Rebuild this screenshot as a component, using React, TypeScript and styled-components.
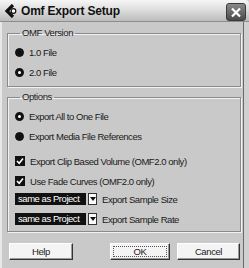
import React from 'react';
import styled, { createGlobalStyle } from 'styled-components';

const GlobalStyle = createGlobalStyle`
  html, body {
    margin: 0;
    padding: 0;
    background: #d6d6d6;
  }
  body {
    font-family: "Liberation Sans", Arial, sans-serif;
  }
`;

const Window = styled.div`
  width: 249px;
  height: 268px;
  box-sizing: border-box;
  display: flex;
  flex-direction: column;
  background: #d0d0d0;
  overflow: hidden;
`;

const TitleBar = styled.div`
  height: 22px;
  display: flex;
  align-items: center;
  padding: 0 3px 0 5px;
  gap: 4px;
  background: linear-gradient(#f6f6f6, #dedede 45%, #bcbcbc);
  border-bottom: 1px solid #8c8c8c;
  border-top-right-radius: 4px;
  box-sizing: border-box;
`;

const Title = styled.span`
  flex: 1;
  font-size: 12px;
  font-weight: bold;
  color: #111;
  letter-spacing: -0.2px;
`;

const CloseButton = styled.div`
  width: 18px;
  height: 16px;
  border-radius: 3px;
  background: linear-gradient(#8a8a8a, #4a4a4a);
  border: 1px solid #3a3a3a;
  display: flex;
  align-items: center;
  justify-content: center;
  margin-top: 3px;
`;

const Body = styled.div`
  flex: 1;
  display: flex;
  flex-direction: column;
  padding: 5px 2px 0 5px;
  margin-right: 5px;
  background: #c9c9c9;
  border-left: 2px solid #e8e8e8;
  border-right: 1px solid #6a6a6a;
`;

const Group = styled.fieldset<{ $top?: number; $bottom: number }>`
  margin: ${(p) => p.$top ?? 0}px 0 0 0;
  padding: 3px 0 ${(p) => p.$bottom}px 7px;
  border: 1px solid #8a8a8a;
  box-shadow: 1px 1px 0 #f2f2f2, inset 1px 1px 0 #f2f2f2;
  display: flex;
  flex-direction: column;
  min-width: 0;
`;

const Legend = styled.legend`
  font-size: 9.5px;
  line-height: 12px;
  padding: 0 2px;
  margin-left: 5px;
  color: #1a1a1a;
  letter-spacing: -0.4px;
`;

const Row = styled.div<{ $gap?: number }>`
  height: 20px;
  display: flex;
  align-items: center;
  gap: 5px;
  margin-top: ${(p) => p.$gap ?? 0}px;
  font-size: 9.5px;
  color: #1a1a1a;
  white-space: nowrap;
  letter-spacing: -0.45px;
`;

const Radio = styled.span<{ $on: boolean }>`
  width: 9px;
  height: 9px;
  border-radius: 50%;
  box-sizing: border-box;
  background: ${(p) => (p.$on ? '#fff' : '#111')};
  border: ${(p) => (p.$on ? '3px solid #111' : '1px solid #111')};
  flex: none;
`;

const Check = styled.span`
  width: 10px;
  height: 10px;
  background: #111;
  display: flex;
  align-items: center;
  justify-content: center;
  flex: none;
`;

const Select = styled.div`
  width: 71px;
  height: 12px;
  background: #111;
  color: #fff;
  font-size: 9.5px;
  line-height: 12px;
  padding-left: 3px;
  box-sizing: border-box;
  overflow: hidden;
`;

const SelectArrow = styled.div`
  width: 9px;
  height: 12px;
  background: #fafafa;
  border: 1px solid #333;
  box-sizing: border-box;
  display: flex;
  align-items: center;
  justify-content: center;
  margin-left: -3px;
`;

const Buttons = styled.div`
  display: flex;
  margin-top: 11px;
  padding-left: 2px;
`;

const Button = styled.div<{ $width: number; $left: number; $focus?: boolean }>`
  width: ${(p) => p.$width}px;
  height: 17px;
  margin-left: ${(p) => p.$left}px;
  box-sizing: border-box;
  background: #f4f4f4;
  border: 1px solid;
  border-color: #fff #333 #333 #fff;
  box-shadow: inset -1px -1px 0 #999;
  display: flex;
  align-items: center;
  justify-content: center;
  font-size: 9.5px;
  letter-spacing: -0.4px;
  color: #1a1a1a;
  outline: ${(p) => (p.$focus ? '1px dotted #555' : 'none')};
  outline-offset: -4px;
`;

const BackIcon = () => (
  <svg width="12" height="14" viewBox="0 0 12 14">
    <path d="M8 1 L2 7 L8 13" fill="none" stroke="#111" strokeWidth="3.2" strokeLinejoin="miter" />
    <circle cx="8.5" cy="7" r="2.3" fill="#fff" stroke="#111" strokeWidth="1.2" />
  </svg>
);

const CheckMark = () => (
  <svg width="8" height="8" viewBox="0 0 8 8">
    <path d="M1 4 L3.2 6.3 L7 1.5" fill="none" stroke="#fff" strokeWidth="1.6" />
  </svg>
);

const App = (): JSX.Element => (
  <>
    <GlobalStyle />
    <Window>
      <TitleBar>
        <BackIcon />
        <Title>Omf Export Setup</Title>
        <CloseButton>
          <svg width="12" height="11" viewBox="0 0 12 11">
            <path d="M2 1.5 L10 9.5 M10 1.5 L2 9.5" stroke="#fff" strokeWidth="2.2" />
          </svg>
        </CloseButton>
      </TitleBar>
      <Body>
        <Group $bottom={4}>
          <Legend>OMF Version</Legend>
          <Row>
            <Radio $on={false} />
            1.0 File
          </Row>
          <Row>
            <Radio $on />
            2.0 File
          </Row>
        </Group>
        <Group $top={4} $bottom={2}>
          <Legend>Options</Legend>
          <Row>
            <Radio $on />
            Export All to One File
          </Row>
          <Row>
            <Radio $on={false} />
            Export Media File References
          </Row>
          <Row $gap={5}>
            <Check>
              <CheckMark />
            </Check>
            Export Clip Based Volume (OMF2.0 only)
          </Row>
          <Row>
            <Check>
              <CheckMark />
            </Check>
            Use Fade Curves (OMF2.0 only)
          </Row>
          {['Export Sample Size', 'Export Sample Rate'].map((label, i) => (
            <Row key={label} $gap={i === 0 ? -2 : 0}>
              <Select>same as Project</Select>
              <SelectArrow>
                <svg width="6" height="4" viewBox="0 0 6 4">
                  <path d="M0 0 H6 L3 4 Z" fill="#111" />
                </svg>
              </SelectArrow>
              {label}
            </Row>
          ))}
        </Group>
        <Buttons>
          <Button $width={64} $left={0}>Help</Button>
          <Button $width={60} $left={37} $focus>OK</Button>
          <Button $width={63} $left={7}>Cancel</Button>
        </Buttons>
      </Body>
    </Window>
  </>
);

export default App;
